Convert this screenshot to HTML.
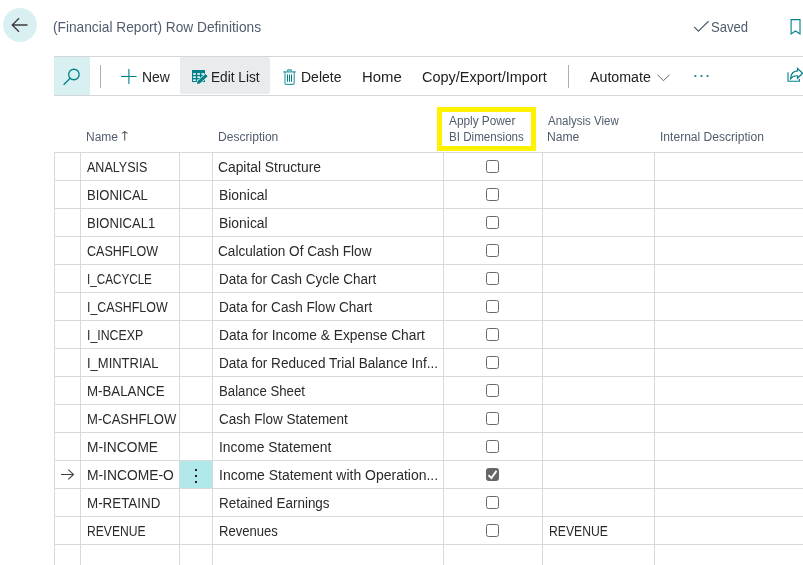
<!DOCTYPE html>
<html><head><meta charset="utf-8"><title>(Financial Report) Row Definitions</title>
<style>
html,body{margin:0;padding:0;background:#fff;}
body{width:803px;height:565px;position:relative;overflow:hidden;font-family:"Liberation Sans",Arial,sans-serif;}
.t{position:absolute;transform-origin:0 50%;white-space:nowrap;height:20px;line-height:20px;}
.b{font-size:14px;color:#2a2a2a;}
.h{font-size:12px;color:#505c6d;}
.tb{font-size:14px;color:#212121;}
.ti{font-size:13.9px;color:#505c6d;}
.hl{position:absolute;height:1px;background:#d6dade;left:54px;width:749px;}
.vl{position:absolute;width:1px;background:#d6dade;top:152px;height:413px;}
.cb{position:absolute;width:11px;height:11px;border:1px solid #696969;border-radius:2.5px;background:#fff;left:486px;}
svg{position:absolute;overflow:visible}
#app{position:absolute;left:0;top:0;width:803px;height:565px;will-change:transform;}
</style></head><body><div id="app">
<div style="position:absolute;left:3px;top:8px;width:34px;height:34px;border-radius:50%;background:#d9f0f2"></div>
<svg style="left:11px;top:17px" width="18" height="16" viewBox="0 0 18 16"><path d="M16.5 8H1.5M8 1.2L1.2 8L8 14.8" fill="none" stroke="#3b3b3b" stroke-width="1.3"/></svg>
<span id="t1" class="t ti" style="left:52.66px;top:17.0px;transform:scaleX(0.9869);">(Financial Report) Row Definitions</span>
<svg style="left:693px;top:20px" width="15" height="12" viewBox="0 0 15 12"><path d="M1.2 6.9L5.4 11.1L15.5 1.3" fill="none" stroke="#505c6d" stroke-width="1.2"/></svg>
<span id="t2" class="t ti" style="left:710.90px;top:17.0px;transform:scaleX(0.9413);">Saved</span>
<svg style="left:790px;top:19px" width="13" height="17" viewBox="0 0 13 17"><path d="M1.1 0.6H10V15L5.55 12L1.1 15Z" fill="none" stroke="#008089" stroke-width="1.1"/></svg>
<div class="hl" style="top:56px;background:#d4d6db"></div><div class="hl" style="top:95px;background:#d4d6db"></div>
<div style="position:absolute;left:54px;top:57px;width:36px;height:38px;background:#d9f0f2"></div>
<svg style="left:63px;top:68px" width="18" height="18" viewBox="0 0 18 18"><circle cx="10.9" cy="6.5" r="5.25" fill="none" stroke="#008089" stroke-width="1.3"/><path d="M7.2 10.2L0.6 16.8" stroke="#008089" stroke-width="1.3" fill="none"/></svg>
<div style="position:absolute;left:100px;top:65px;width:1px;height:23px;background:#a9aeb9"></div>
<svg style="left:121px;top:69px" width="16" height="16" viewBox="0 0 16 16"><path d="M7.9 0.1V14.9M0 7.45H15.7" stroke="#008089" stroke-width="1.1" fill="none"/></svg>
<span id="t3" class="t tb" style="left:141.79px;top:67.0px;transform:scaleX(0.9957);">New</span>
<div style="position:absolute;left:180px;top:57.4px;width:90px;height:36.7px;border-radius:2px;background:#e9ebed"></div>
<svg style="left:192px;top:70px" width="16" height="14" viewBox="0 0 16 14"><rect x="0" y="0" width="13" height="12" fill="#008089"/><rect x="1.20" y="3.2" width="2.6" height="1.6" fill="#fff"/><rect x="1.20" y="6.3" width="2.6" height="1.6" fill="#fff"/><rect x="1.20" y="9.4" width="2.6" height="1.6" fill="#fff"/><rect x="5.35" y="3.2" width="2.6" height="1.6" fill="#fff"/><rect x="5.35" y="6.3" width="2.6" height="1.6" fill="#fff"/><rect x="5.35" y="9.4" width="2.6" height="1.6" fill="#fff"/><rect x="9.50" y="3.2" width="2.6" height="1.6" fill="#fff"/><rect x="9.50" y="6.3" width="2.6" height="1.6" fill="#fff"/><rect x="9.50" y="9.4" width="2.6" height="1.6" fill="#fff"/><path d="M5.0 13.9L5.6 11.1L13.6 3.9L15.7 6.2L7.7 13.4Z" fill="#008089" stroke="#f4f6f7" stroke-width="1.3" paint-order="stroke"/></svg>
<span id="t4" class="t tb" style="left:210.95px;top:67.0px;transform:scaleX(0.9763);">Edit List</span>
<svg style="left:283px;top:68px" width="13" height="17" viewBox="0 0 13 17"><path d="M2 4V15.2Q2 16.4 3.2 16.4H10Q11.2 16.4 11.2 15.2V4" fill="none" stroke="#3aa0a7" stroke-width="1.2"/><path d="M0.2 3.9H12.8" stroke="#3aa0a7" stroke-width="1.3"/><path d="M4.6 3.6V2.6Q4.6 1.8 5.4 1.8H7.6Q8.4 1.8 8.4 2.6V3.6" fill="none" stroke="#2a989f" stroke-width="1.2"/><path d="M4.5 6.4V13.8M6.5 6.4V13.8M8.5 6.4V13.8" stroke="#008089" stroke-width="1"/></svg>
<span id="t5" class="t tb" style="left:301.03px;top:67.0px;transform:scaleX(0.9991);">Delete</span>
<span id="t6" class="t tb" style="left:361.86px;top:67.0px;transform:scaleX(1.0641);">Home</span>
<span id="t7" class="t tb" style="left:422.22px;top:67.0px;transform:scaleX(1.0347);">Copy/Export/Import</span>
<div style="position:absolute;left:568px;top:65px;width:1px;height:23px;background:#a9aeb9"></div>
<span id="t8" class="t tb" style="left:590.36px;top:67.0px;transform:scaleX(1.0157);">Automate</span>
<svg style="left:657px;top:74px" width="13" height="8" viewBox="0 0 13 8"><path d="M0.6 0.8L6.5 6.7L12.4 0.8" fill="none" stroke="#555" stroke-width="0.9"/></svg>
<svg style="left:694px;top:74px" width="15" height="4" viewBox="0 0 15 4"><circle cx="1.4" cy="2" r="1.1" fill="#008089"/><circle cx="7.45" cy="2" r="1.1" fill="#008089"/><circle cx="13.5" cy="2" r="1.1" fill="#008089"/></svg>
<svg style="left:786px;top:67px" width="18" height="17" viewBox="0 0 18 17"><path d="M2 5.2V14.3H13.4V12" fill="none" stroke="#008089" stroke-width="1.1"/><path d="M11.5 1.4L16.6 6.2L11.5 11.2V8.8Q7 8.5 4.6 11.6Q5 4.2 11.5 3.8Z" fill="none" stroke="#008089" stroke-width="1.2"/></svg>
<span id="t9" class="t h" style="left:85.60px;top:127.0px;transform:scaleX(0.9972);">Name</span>
<span id="t10" class="t h" style="left:117.52px;top:124.5px;transform:scaleX(1.5889);font-size:16px;color:#555;">↑</span>
<span id="t11" class="t h" style="left:217.60px;top:127.0px;transform:scaleX(1.0050);">Description</span>
<div style="position:absolute;left:437px;top:107px;width:89px;height:34px;border:5px solid #fff200"></div>
<span id="t12" class="t h" style="left:448.83px;top:111.0px;transform:scaleX(0.9849);">Apply Power</span>
<span id="t13" class="t h" style="left:449.03px;top:127.0px;transform:scaleX(0.9675);">BI Dimensions</span>
<span id="t14" class="t h" style="left:547.76px;top:111.0px;transform:scaleX(0.9580);">Analysis View</span>
<span id="t15" class="t h" style="left:547.13px;top:127.0px;transform:scaleX(1.0109);">Name</span>
<span id="t16" class="t h" style="left:659.88px;top:127.0px;transform:scaleX(1.0057);">Internal Description</span>
<div class="hl" style="top:152px"></div><div class="hl" style="top:180px"></div><div class="hl" style="top:208px"></div><div class="hl" style="top:236px"></div><div class="hl" style="top:264px"></div><div class="hl" style="top:292px"></div><div class="hl" style="top:320px"></div><div class="hl" style="top:348px"></div><div class="hl" style="top:376px"></div><div class="hl" style="top:404px"></div><div class="hl" style="top:432px"></div><div class="hl" style="top:460px"></div><div class="hl" style="top:488px"></div><div class="hl" style="top:516px"></div><div class="hl" style="top:544px"></div>
<div class="vl" style="left:54px"></div><div class="vl" style="left:80px"></div><div class="vl" style="left:179px"></div><div class="vl" style="left:212px"></div><div class="vl" style="left:443px"></div><div class="vl" style="left:542px"></div><div class="vl" style="left:654px"></div>
<span id="t17" class="t b" style="left:87.45px;top:157.0px;transform:scaleX(0.8946);">ANALYSIS</span>
<span id="t18" class="t b" style="left:218.35px;top:157.0px;transform:scaleX(0.9871);">Capital Structure</span>
<div class="cb" style="top:160px"></div>
<span id="t19" class="t b" style="left:87.28px;top:185.0px;transform:scaleX(0.9309);">BIONICAL</span>
<span id="t20" class="t b" style="left:218.80px;top:185.0px;transform:scaleX(0.9926);">Bionical</span>
<div class="cb" style="top:188px"></div>
<span id="t21" class="t b" style="left:87.28px;top:213.0px;transform:scaleX(0.9317);">BIONICAL1</span>
<span id="t22" class="t b" style="left:218.80px;top:213.0px;transform:scaleX(0.9926);">Bionical</span>
<div class="cb" style="top:216px"></div>
<span id="t23" class="t b" style="left:86.99px;top:241.0px;transform:scaleX(0.8965);">CASHFLOW</span>
<span id="t24" class="t b" style="left:218.38px;top:241.0px;transform:scaleX(0.9718);">Calculation Of Cash Flow</span>
<div class="cb" style="top:244px"></div>
<span id="t25" class="t b" style="left:87.05px;top:269.0px;transform:scaleX(0.8343);">I_CACYCLE</span>
<span id="t26" class="t b" style="left:218.85px;top:269.0px;transform:scaleX(0.9623);">Data for Cash Cycle Chart</span>
<div class="cb" style="top:272px"></div>
<span id="t27" class="t b" style="left:86.87px;top:297.0px;transform:scaleX(0.8856);">I_CASHFLOW</span>
<span id="t28" class="t b" style="left:218.84px;top:297.0px;transform:scaleX(0.9699);">Data for Cash Flow Chart</span>
<div class="cb" style="top:300px"></div>
<span id="t29" class="t b" style="left:86.95px;top:325.0px;transform:scaleX(0.8802);">I_INCEXP</span>
<span id="t30" class="t b" style="left:218.82px;top:325.0px;transform:scaleX(0.9832);">Data for Income &amp; Expense Chart</span>
<div class="cb" style="top:328px"></div>
<span id="t31" class="t b" style="left:87.25px;top:353.0px;transform:scaleX(0.9272);">I_MINTRIAL</span>
<span id="t32" class="t b" style="left:218.84px;top:353.0px;transform:scaleX(0.9704);">Data for Reduced Trial Balance Inf...</span>
<div class="cb" style="top:356px"></div>
<span id="t33" class="t b" style="left:87.26px;top:381.0px;transform:scaleX(0.9488);">M-BALANCE</span>
<span id="t34" class="t b" style="left:218.87px;top:381.0px;transform:scaleX(0.9432);">Balance Sheet</span>
<div class="cb" style="top:384px"></div>
<span id="t35" class="t b" style="left:87.28px;top:409.0px;transform:scaleX(0.9327);">M-CASHFLOW</span>
<span id="t36" class="t b" style="left:218.76px;top:409.0px;transform:scaleX(0.9628);">Cash Flow Statement</span>
<div class="cb" style="top:412px"></div>
<span id="t37" class="t b" style="left:87.22px;top:437.0px;transform:scaleX(0.9818);">M-INCOME</span>
<span id="t38" class="t b" style="left:218.59px;top:437.0px;transform:scaleX(0.9890);">Income Statement</span>
<div class="cb" style="top:440px"></div>
<div style="position:absolute;left:180px;top:461px;width:32px;height:27px;background:#b1e8ea"></div>
<svg style="left:194px;top:468px" width="4" height="16" viewBox="0 0 4 16"><rect x="1" y="1" width="2" height="2" fill="#222"/><rect x="1" y="7" width="2" height="2" fill="#222"/><rect x="1" y="13" width="2" height="2" fill="#222"/></svg>
<svg style="left:61px;top:469px" width="13" height="11" viewBox="0 0 13 11"><path d="M0 5.45H12.4M7.3 0.6L12.5 5.45L7.3 10.3" fill="none" stroke="#3f3f3f" stroke-width="1.1"/></svg>
<span id="t39" class="t b" style="left:87.21px;top:465.0px;transform:scaleX(0.9875);">M-INCOME-O</span>
<span id="t40" class="t b" style="left:218.56px;top:465.0px;transform:scaleX(0.9985);">Income Statement with Operation...</span>
<div class="cb" style="top:468px;background:#666;border-color:#666"></div><svg style="left:486px;top:468px" width="13" height="13" viewBox="0 0 13 13"><path d="M2.4 7.1L5.4 10L10.5 2.9" fill="none" stroke="#fff" stroke-width="1.9"/></svg>
<span id="t41" class="t b" style="left:87.25px;top:493.0px;transform:scaleX(0.9551);">M-RETAIND</span>
<span id="t42" class="t b" style="left:218.85px;top:493.0px;transform:scaleX(0.9599);">Retained Earnings</span>
<div class="cb" style="top:496px"></div>
<span id="t43" class="t b" style="left:87.00px;top:521.0px;transform:scaleX(0.8661);">REVENUE</span>
<span id="t44" class="t b" style="left:218.88px;top:521.0px;transform:scaleX(0.9333);">Revenues</span>
<div class="cb" style="top:524px"></div>
<span id="t45" class="t b" style="left:548.86px;top:521.0px;transform:scaleX(0.8710);">REVENUE</span>
</div></body></html>
